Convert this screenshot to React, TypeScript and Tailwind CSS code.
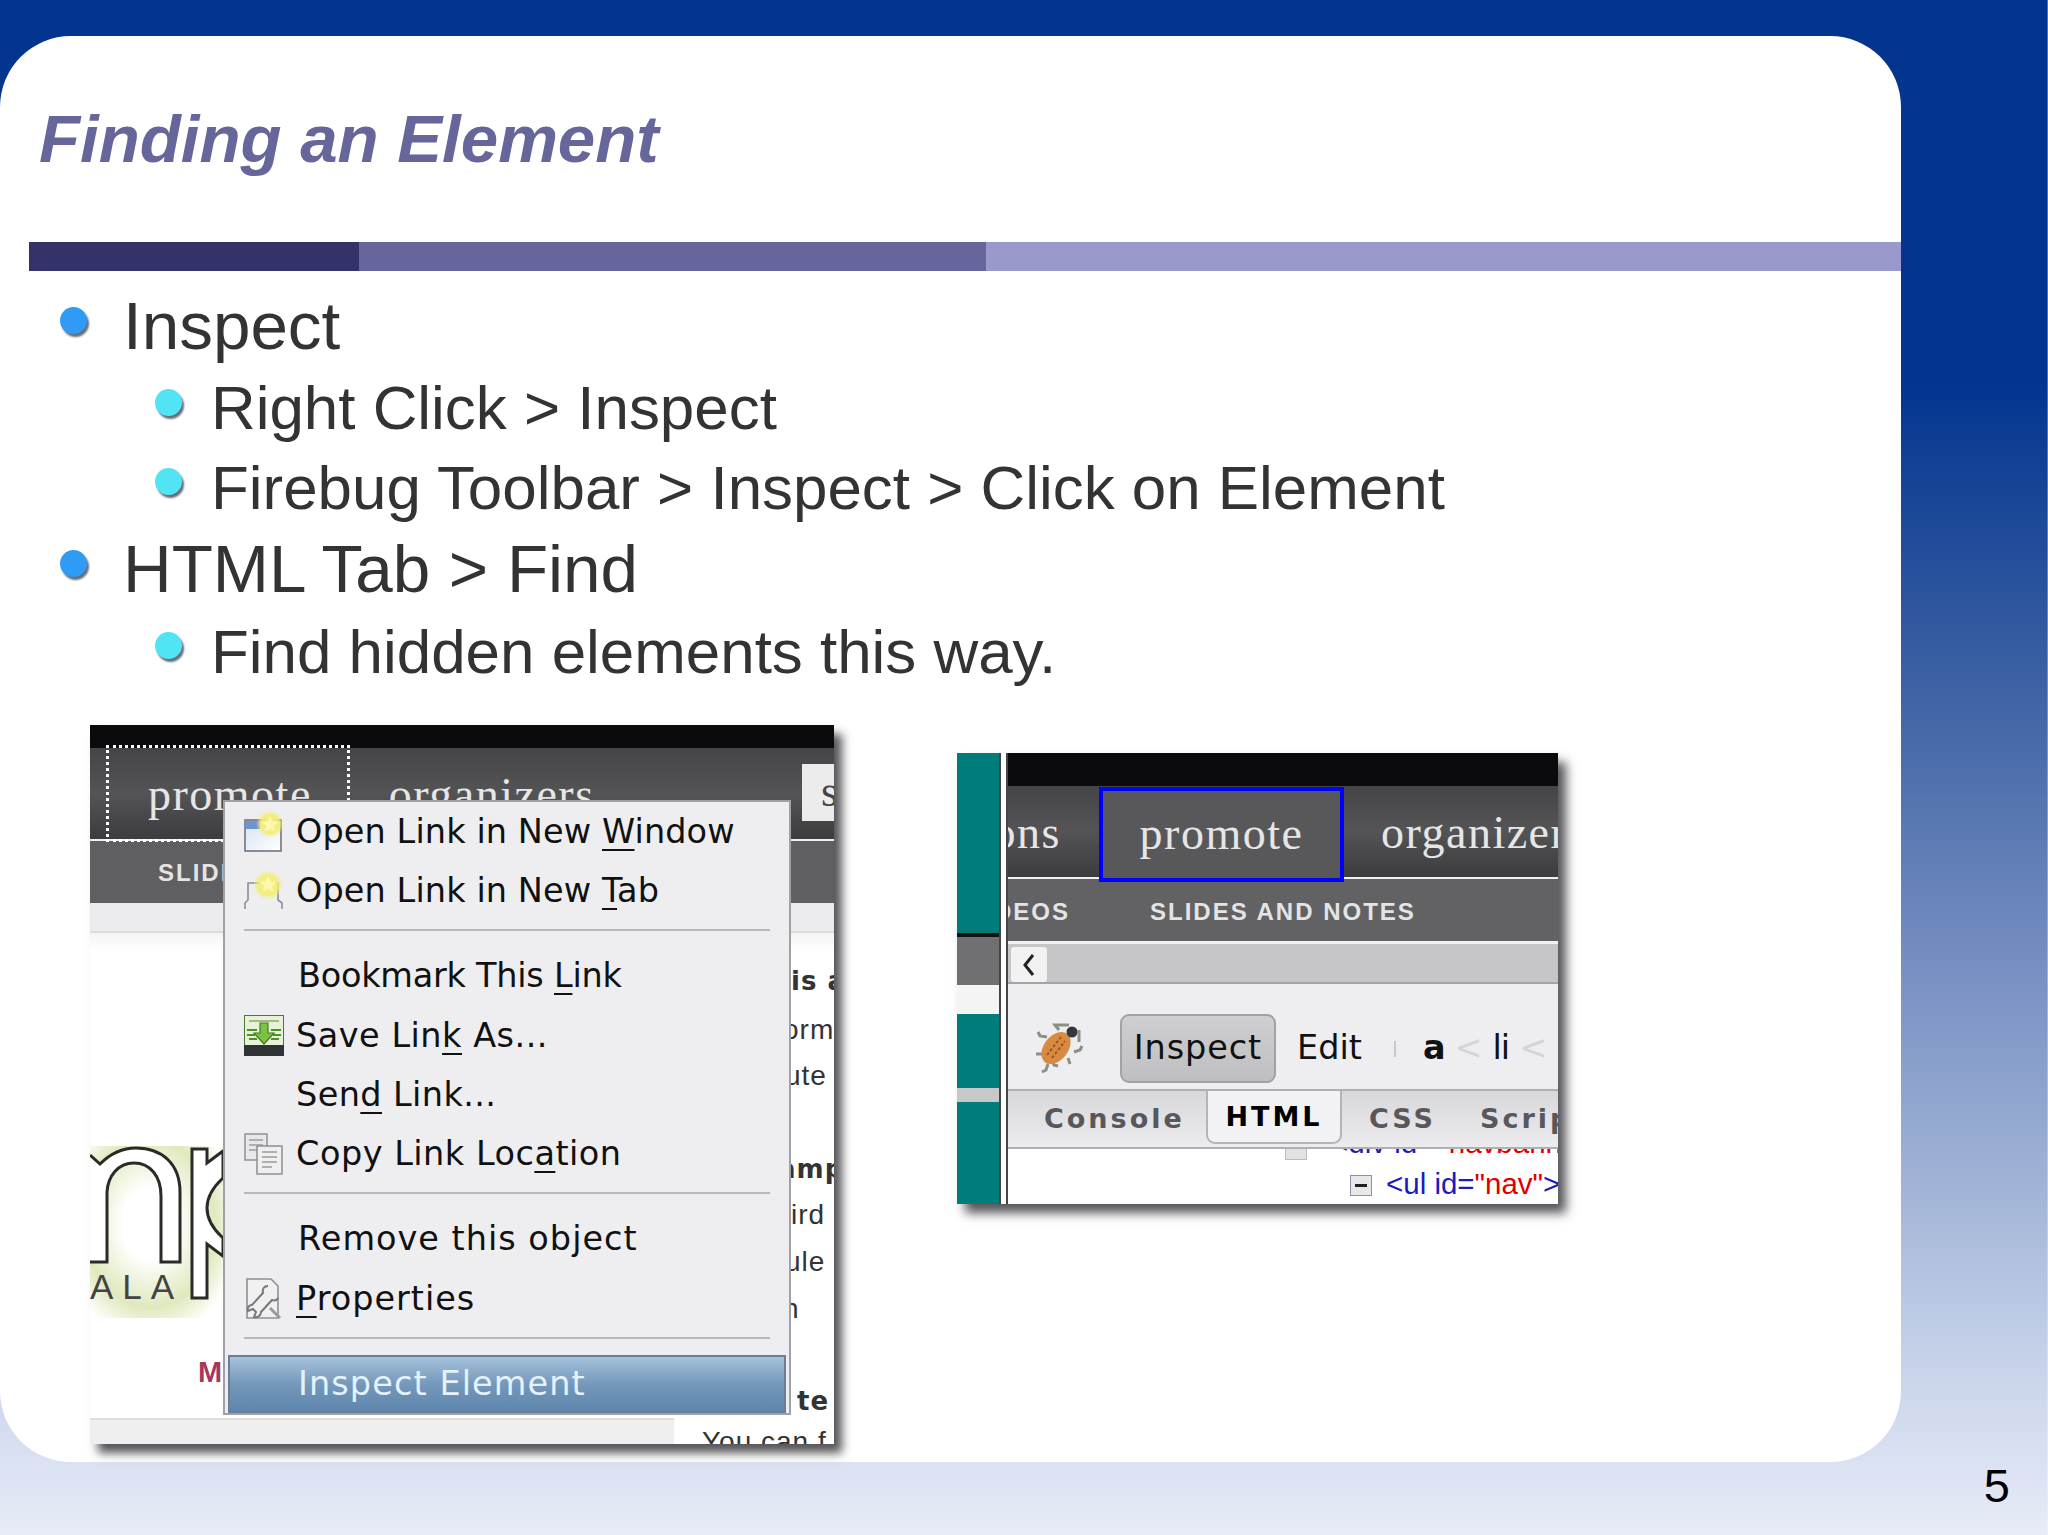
import React from "react";

const sans = "font-['Liberation_Sans',Arial,sans-serif]";
const serif = "font-['Liberation_Serif','Times_New_Roman',serif]";
const deja = "font-['DejaVu_Sans',Verdana,sans-serif]";
const ul = "underline-offset-[6px] decoration-2";

function Bullet({ sub }: { sub?: boolean }) {
  return sub ? (
    <span className="block w-[27px] h-[27px] mt-[20px] ml-[155px] shrink-0 rounded-full bg-[#50e4f5] shadow-[2px_3px_2px_rgba(50,60,80,0.75)]" />
  ) : (
    <span className="block w-[27px] h-[27px] mt-[21px] ml-[60px] shrink-0 rounded-full bg-[#2f9bf5] shadow-[2px_3px_2px_rgba(50,60,80,0.75)]" />
  );
}

function NewWindowIcon() {
  return (
    <svg width="40" height="42" viewBox="0 0 40 42" className="shrink-0">
      <defs>
        <radialGradient id="glow1">
          <stop offset="0" stopColor="#fff27a" />
          <stop offset="0.65" stopColor="#f2ee70" stopOpacity="0.9" />
          <stop offset="1" stopColor="#f2ee70" stopOpacity="0" />
        </radialGradient>
        <linearGradient id="win" x1="0" y1="0" x2="1" y2="1">
          <stop offset="0" stopColor="#d8e2f2" />
          <stop offset="1" stopColor="#ffffff" />
        </linearGradient>
      </defs>
      <rect x="1" y="9" width="36" height="31" fill="url(#win)" stroke="#6d7480" strokeWidth="1.6" />
      <rect x="2" y="10" width="14" height="8" fill="#6f95cf" />
      <circle cx="26" cy="13" r="14" fill="url(#glow1)" />
      <path d="M26 5l2.4 5.6 6 .5-4.6 3.9 1.4 5.9-5.2-3.1-5.2 3.1 1.4-5.9-4.6-3.9 6-.5z" fill="#fff6b0" />
    </svg>
  );
}

function NewTabIcon() {
  return (
    <svg width="40" height="42" viewBox="0 0 40 42" className="shrink-0">
      <defs>
        <radialGradient id="glow2">
          <stop offset="0" stopColor="#fff27a" />
          <stop offset="0.65" stopColor="#f2ee70" stopOpacity="0.9" />
          <stop offset="1" stopColor="#f2ee70" stopOpacity="0" />
        </radialGradient>
      </defs>
      <path d="M1 39v-6l3-3V13h30v17l4 3v6" fill="none" stroke="#8a8f98" strokeWidth="1.6" />
      <circle cx="24" cy="15" r="15" fill="url(#glow2)" />
      <path d="M24 6l2.4 5.6 6 .5-4.6 3.9 1.4 5.9-5.2-3.1-5.2 3.1 1.4-5.9-4.6-3.9 6-.5z" fill="#fff6b0" />
    </svg>
  );
}

function SaveIcon() {
  return (
    <svg width="40" height="41" viewBox="0 0 40 41" className="shrink-0">
      <rect x="0.5" y="0.5" width="39" height="40" fill="#e8f2d8" stroke="#4a7a30" />
      <rect x="0" y="30" width="40" height="11" fill="#2f3336" />
      <path d="M5 6h30" stroke="#8aa86a" strokeWidth="1.5" />
      <path d="M3 15h10M27 15h10M3 20l8 0M29 20l8 0M5 24h8M27 24h8" stroke="#4d8f2c" strokeWidth="2" />
      <path d="M16 8h8v10h6L20 29 10 18h6z" fill="#7cc143" stroke="#3f7f22" strokeWidth="1.2" />
    </svg>
  );
}

function CopyIcon() {
  return (
    <svg width="40" height="42" viewBox="0 0 40 42" className="shrink-0">
      <rect x="1" y="1" width="22" height="26" fill="#e8e8ea" stroke="#8f8f94" strokeWidth="1.5" />
      <path d="M5 7h14M5 12h14M5 17h8" stroke="#9a9a9e" strokeWidth="1.6" />
      <rect x="13" y="13" width="25" height="28" fill="#efefef" stroke="#8f8f94" strokeWidth="1.5" />
      <path d="M18 19h15M18 24h15M18 29h15M18 34h10" stroke="#9a9a9e" strokeWidth="1.6" />
    </svg>
  );
}

function PropsIcon() {
  return (
    <svg width="40" height="42" viewBox="0 0 40 42" className="shrink-0">
      <path d="M3 1h24l7 7v32H3z" fill="#f0f0f0" stroke="#8f8f94" strokeWidth="1.6" />
      <path d="M24 8c-4 0-6 3-5 7L8 27c-3 0-5 3-4 6l5-2 3 3-2 5c4 1 7-2 7-5l11-12c3 1 5 0 6-2" fill="none" stroke="#77777c" strokeWidth="2" />
      <path d="M26 30l10 10" stroke="#9a9a9e" strokeWidth="3" />
    </svg>
  );
}

function MenuRow({ icon, track, children }: { icon?: React.ReactNode; track?: string; children: React.ReactNode }) {
  return (
    <div className="flex items-center h-[59.5px] pl-[19px]">
      <div className="w-[40px] flex items-center shrink-0">{icon}</div>
      <span className={`ml-[12px] ${deja} text-[33.5px] leading-[40px] text-[#111] whitespace-nowrap ${track ?? ""}`}>{children}</span>
    </div>
  );
}

function Sep() {
  return (
    <div className="h-[25.5px] px-[19px] pt-[8px] shrink-0">
      <div className="h-[2px] bg-[#b8b8ba]" />
    </div>
  );
}

function Logo() {
  return (
    <svg width="133" height="172" viewBox="0 0 133 172" className="block">
      <defs>
        <radialGradient id="green" cx="0.45" cy="0.45" r="0.68">
          <stop offset="0.3" stopColor="#ffffff" />
          <stop offset="0.72" stopColor="#dfe9bd" />
          <stop offset="1" stopColor="#ffffff" />
        </radialGradient>
      </defs>
      <rect x="0" y="0" width="133" height="172" fill="url(#green)" />
      <path d="M0 9L10 18C20 8 32 2 46 2C72 2 90 18 90 46V116H71V50C71 30 60 17 44 17C28 17 18 30 17 46V116H0" fill="#fff" stroke="#2a2a26" strokeWidth="3" />
      <path d="M133 5L117 17V3H102V152H117V98L133 110V92C122 82 117 72 117 62C117 52 122 42 133 32Z" fill="#fff" stroke="#2a2a26" strokeWidth="3" />
    </svg>
  );
}

function LeftShot() {
  return (
    <div className="relative w-[744px] h-[719px] shrink-0 flex flex-col overflow-hidden shadow-[8px_9px_9px_rgba(30,30,35,0.75)] bg-white">
      <div className="h-[23px] bg-[#0b0b0d] shrink-0" />
      <div className="h-[91px] shrink-0 flex bg-gradient-to-b from-[#454548] via-[#545457] to-[#3c3c3f] overflow-hidden whitespace-nowrap">
        <span className={`ml-[58px] mt-[18px] ${serif} text-[46px] leading-[58px] text-[#e6e6e6] tracking-[1.5px]`}>promote</span>
        <span className={`ml-[77px] mt-[18px] ${serif} text-[46px] leading-[58px] text-[#e6e6e6] tracking-[1.5px]`}>organizers</span>
        <div className={`ml-auto mt-[16px] w-[32px] h-[57px] bg-[#ececec] pl-[19px] ${serif} text-[44px] leading-[56px] text-[#444] overflow-hidden`}>s</div>
      </div>
      <div className="h-[2px] bg-[#f0f0f0] shrink-0" />
      <div className="h-[62px] shrink-0 bg-[#5f5f62] flex items-center pt-[2px]">
        <span className={`ml-[68px] ${sans} font-bold text-[24px] tracking-[2px] text-[#e4e4e4]`}>SLIDES</span>
      </div>
      <div className="h-[30px] bg-[#ececee] shrink-0 border-b-2 border-[#dcdcdc]" />
      <div className="h-[18px] bg-gradient-to-b from-[#f4f4f2] to-white shrink-0" />
      <div className="flex-1 relative" />
      <div className="h-[26px] shrink-0 bg-[#efefef] border-t-2 border-[#dedede] w-[584px]" />

      {/* focus outline round the promote tab */}
      <div className="absolute left-[16px] top-[20px] w-[244px] h-[97px] border-[3px] border-dotted border-white" />

      {/* logo on the page behind the menu */}
      <div className="absolute left-0 top-[421px]">
        <Logo />
      </div>
      <span className={`absolute left-[0px] top-[540px] ${sans} text-[35px] leading-[44px] tracking-[9px] text-[#444]`}>ALA</span>
      <span className={`absolute left-[108px] top-[630px] ${sans} font-bold text-[29px] leading-[34px] text-[#a8385a]`}>M</span>

      {/* text column of the page, showing past the menu */}
      <div className={`absolute left-[701px] top-[241px] w-[43px] overflow-hidden ${sans} text-[28px] tracking-[1px] text-[#333] whitespace-nowrap`}>
        <div className={`${deja} font-bold text-[26px] leading-[30px] h-[30px]`}>is a</div>
        <div className="leading-[30px] mt-[19px] -ml-[8px]">orm</div>
        <div className="leading-[30px] mt-[16px] -ml-[6px]">ute</div>
        <div className={`${deja} font-bold text-[26px] leading-[30px] mt-[63px] -ml-[13px]`}>amp</div>
        <div className="leading-[30px] mt-[16px]">ird</div>
        <div className="leading-[30px] mt-[17px] -ml-[6px]">ule</div>
        <div className="leading-[30px] mt-[17px] -ml-[8px]">n</div>
        <div className={`${deja} font-bold text-[26px] leading-[30px] mt-[62px] ml-[6px]`}>te</div>
      </div>
      <span className={`absolute left-[612px] top-[702px] ${sans} text-[28px] tracking-[1px] leading-[30px] text-[#333] whitespace-nowrap`}>You can f</span>

      {/* context menu */}
      <div className="absolute left-[133px] top-[75px] w-[568px] h-[615px] bg-[#eeeef0] border-2 border-[#a0a0a6] flex flex-col">
        <MenuRow icon={<NewWindowIcon />} track="tracking-[0.1px]">
          Open Link in New <u className={ul}>W</u>indow
        </MenuRow>
        <MenuRow icon={<NewTabIcon />} track="tracking-[0.1px]">
          Open Link in New <u className={ul}>T</u>ab
        </MenuRow>
        <Sep />
        <MenuRow track="tracking-[-0.25px] ml-[14px]">
          Bookmark This <u className={ul}>L</u>ink
        </MenuRow>
        <MenuRow icon={<SaveIcon />} track="tracking-[0.5px]">
          Save Lin<u className={ul}>k</u> As...
        </MenuRow>
        <MenuRow track="tracking-[0.4px]">
          Sen<u className={ul}>d</u> Link...
        </MenuRow>
        <MenuRow icon={<CopyIcon />} track="tracking-[0.5px]">
          Copy Link Loc<u className={ul}>a</u>tion
        </MenuRow>
        <Sep />
        <MenuRow track="tracking-[1px] ml-[14px]">Remove this object</MenuRow>
        <MenuRow icon={<PropsIcon />} track="tracking-[1px]">
          <u className={ul}>P</u>roperties
        </MenuRow>
        <Sep />
        <div className="mx-[3px] mt-[1px] h-[58px] border-2 border-[#6a7f96] bg-gradient-to-b from-[#a6c2dc] via-[#7598bb] to-[#5f86ad] flex items-center pl-[68px] shrink-0">
          <span className={`${deja} text-[33.5px] leading-[40px] tracking-[1.1px] text-[#e4f2fb] whitespace-nowrap`}>Inspect Element</span>
        </div>
      </div>
    </div>
  );
}

function BugIcon() {
  return (
    <svg width="52" height="54" viewBox="0 0 52 54" className="shrink-0">
      <g fill="none" stroke="#8b8f86" strokeWidth="3">
        <path d="M25 8l-4-5h14M13 15l-7-1-2-4M8 32H2M18 38l2 5 4 1M14 42l-2 6-4 2M40 30l6-2 2-4M45 8v12M34 36l2 6" />
      </g>
      <ellipse cx="22" cy="26" rx="12" ry="18" transform="rotate(38 22 26)" fill="#d98a42" />
      <path d="M13 33l14-18M18 36l13-17" stroke="#9a5720" strokeWidth="2" strokeDasharray="3 2" />
      <circle cx="38" cy="10" r="5.5" fill="#33363a" />
    </svg>
  );
}

function RightShot() {
  return (
    <div className="flex w-[601px] h-[451px] shrink-0 mt-[28px] overflow-hidden shadow-[8px_9px_10px_rgba(30,30,35,0.75)] bg-white">
      <div className="w-[42px] shrink-0 flex flex-col">
        <div className="h-[180px] bg-[#007d7a]" />
        <div className="h-[4px] bg-[#111]" />
        <div className="h-[48px] bg-[#707072]" />
        <div className="h-[29px] bg-[#f4f4f4]" />
        <div className="h-[74px] bg-[#007d7a]" />
        <div className="h-[14px] bg-[#c8c8c8]" />
        <div className="flex-1 bg-[#007d7a]" />
      </div>
      <div className="w-[9px] shrink-0 bg-white border-x-2 border-[#444]" />
      <div className="flex-1 min-w-0 flex flex-col overflow-hidden relative">
        <div className="h-[33px] bg-[#0b0b0d] shrink-0" />
        <div className="h-[91px] shrink-0 flex items-center pt-[3px] bg-gradient-to-b from-[#454548] via-[#545457] to-[#3c3c3f] whitespace-nowrap">
          <div className={`w-[53px] shrink-0 flex justify-end overflow-hidden ${serif} text-[46px] leading-[58px] text-[#e6e6e6] tracking-[1.5px]`}>
            <span className="shrink-0">ons</span>
          </div>
          <div className={`ml-[38px] w-[245px] h-[95px] self-start -mt-[2px] relative z-10 shrink-0 bg-[#58585a] border-[4px] border-[#0000ff] flex items-center justify-center pb-[3px] ${serif} text-[46px] text-[#e6e6e6] tracking-[1.5px]`}>promote</div>
          <span className={`ml-[37px] ${serif} text-[46px] leading-[58px] text-[#e6e6e6] tracking-[1.5px]`}>organizers</span>
        </div>
        <div className="h-[2px] bg-[#f0f0f0] shrink-0" />
        <div className={`h-[62px] shrink-0 bg-[#626264] flex items-center pt-[3px] ${sans} font-bold text-[24px] tracking-[2px] text-[#e4e4e4] whitespace-nowrap`}>
          <div className="w-[62px] shrink-0 flex justify-end overflow-hidden">
            <span className="shrink-0">DEOS</span>
          </div>
          <span className="ml-[80px]">SLIDES AND NOTES</span>
        </div>
        <div className="h-[3px] bg-[#f2f2f2] shrink-0" />
        <div className="h-[40px] shrink-0 bg-[#c6c6c8] border-b-2 border-[#a4a4a6] pl-[3px] pt-[3px]">
          <div className="w-[36px] h-[35px] bg-[#f2f2f2] rounded-[3px] flex items-center justify-center">
            <svg width="16" height="24" viewBox="0 0 16 24">
              <path d="M12 2L4 12l8 10" fill="none" stroke="#222" strokeWidth="3" />
            </svg>
          </div>
        </div>
        <div className={`h-[105px] shrink-0 bg-[#eeeef0] flex items-center pt-[24px] ${deja} text-[33.5px] text-[#111] whitespace-nowrap`}>
          <div className="ml-[26px]">
            <BugIcon />
          </div>
          <div className="ml-[34px] w-[156px] h-[69px] rounded-[9px] bg-gradient-to-b from-[#cfcfd1] to-[#bfbfc1] border-2 border-[#a2a2a4] flex items-center justify-center tracking-[0.9px]">Inspect</div>
          <span className="ml-[21px]">Edit</span>
          <span className="ml-[32px] w-[2px] h-[16px] bg-[#c8c8c8]" />
          <span className="ml-[27px] font-bold">a</span>
          <span className="ml-[9px] text-[#d4d4d6]">&lt;</span>
          <span className="ml-[10px] tracking-[-1px]">li</span>
          <span className="ml-[10px] text-[#d4d4d6]">&lt;</span>
        </div>
        <div className={`h-[60px] shrink-0 bg-gradient-to-b from-[#d8d8da] to-[#ececee] border-y-2 border-[#b0b0b2] flex items-start ${deja} font-bold text-[27px] tracking-[3px] text-[#58585c] whitespace-nowrap`}>
          <span className="ml-[36px] leading-[55px] w-[139px] shrink-0">Console</span>
          <span className="ml-[23px] w-[136px] h-[53px] shrink-0 bg-[#f2f2f4] border-x-2 border-b-2 border-[#b4b4b6] rounded-b-[9px] text-black text-center leading-[52px]">HTML</span>
          <span className="ml-[27px] leading-[55px] w-[63px] shrink-0">CSS</span>
          <span className="ml-[48px] leading-[55px]">Script</span>
        </div>
        <div className={`flex-1 bg-white relative overflow-hidden ${sans} text-[29.5px] whitespace-nowrap`}>
          <div className="absolute left-[277px] -top-[10px] w-[22px] h-[21px] bg-[#e2e2e2] border border-[#b8bcc4]" />
          <div className="absolute left-[323px] -top-[22px] leading-[32px] text-[#1a1ac0]">
            &lt;div id=<span className="text-[#e00000] ml-[4px]">"navbanner"</span>
          </div>
          <div className="absolute left-[342px] top-[26px] w-[22px] h-[21px] bg-[#e8e8ea] border border-[#8a94a8] flex items-center justify-center">
            <div className="w-[12px] h-[3px] bg-[#222]" />
          </div>
          <div className="absolute left-[378px] top-[19px] leading-[32px] text-[#1a1ac0]">
            &lt;ul id=<span className="text-[#e00000]">"nav"</span>&gt;
          </div>
        </div>
      </div>
    </div>
  );
}

export default function App() {
  return (
    <div className={`w-[2048px] h-[1535px] overflow-hidden flex flex-col pt-[36px] border-r border-white/30 ${sans} bg-[linear-gradient(to_bottom,#03358f_0%,#03358f_25%,#3e62a4_45%,#7a92c4_64%,#a0b3d6_77%,#c8d3ea_89%,#e8ecf7_100%)]`}>
      <div className="w-[1901px] h-[1426px] shrink-0 bg-white rounded-[71px] flex flex-col pt-[63px]">
        <h1 className="ml-[39px] h-[80px] text-[67.2px] leading-[80px] font-bold italic text-[#66669a] whitespace-nowrap">Finding an Element</h1>
        <div className="mt-[63px] ml-[29px] h-[29px] flex shrink-0">
          <div className="w-[330px] bg-[#33336a]" />
          <div className="w-[627px] bg-[#66669c]" />
          <div className="flex-1 bg-[#9a99cb]" />
        </div>
        <div className="mt-[15px] flex flex-col text-[#333333] whitespace-nowrap">
          <div className="flex h-[83px]">
            <Bullet />
            <span className="ml-[36px] text-[67.4px] leading-[80px]">Inspect</span>
          </div>
          <div className="flex h-[79px]">
            <Bullet sub />
            <span className="ml-[29px] text-[61.9px] leading-[78px]">Right Click &gt; Inspect</span>
          </div>
          <div className="flex h-[81px]">
            <Bullet sub />
            <span className="ml-[29px] text-[61.9px] leading-[79px]">Firebug Toolbar &gt; Inspect &gt; Click on Element</span>
          </div>
          <div className="flex h-[83px]">
            <Bullet />
            <span className="ml-[36px] text-[67.4px] leading-[80px]">HTML Tab &gt; Find</span>
          </div>
          <div className="flex h-[79px]">
            <Bullet sub />
            <span className="ml-[29px] text-[61.9px] leading-[79px]">Find hidden elements this way.</span>
          </div>
        </div>
        <div className="mt-[34px] ml-[90px] flex items-start gap-[123px]">
          <LeftShot />
          <RightShot />
        </div>
      </div>
      <div className="flex justify-end pr-[37px] -mt-[3px]">
        <span className="text-[47px] leading-[54px] text-black">5</span>
      </div>
    </div>
  );
}
